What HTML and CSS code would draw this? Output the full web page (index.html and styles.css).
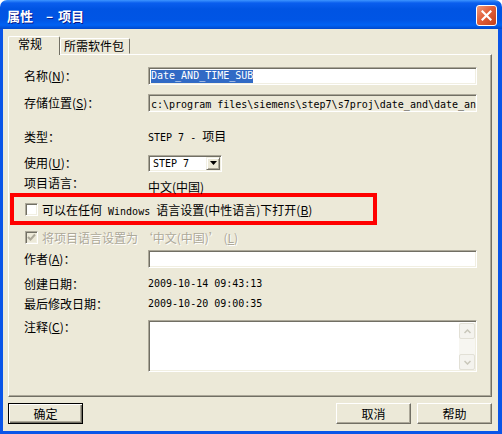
FILE: index.html
```html
<!DOCTYPE html>
<html lang="zh-CN">
<head>
    <meta charset="UTF-8">
    <title>属性 - 项目</title>
    <link rel="stylesheet" href="styles.css">
</head>
<body>
    <div class="window">
        <div class="titlebar">
            <span class="title">属性<span class="sep">–</span>项目</span>
            <span class="close-btn">
                <svg width="11" height="11" viewBox="0 0 11 11"><path d="M1.5 1.5 L9.5 9.5 M9.5 1.5 L1.5 9.5" stroke="#fff" stroke-width="2.2" stroke-linecap="square"/></svg>
            </span>
        </div>

        <div class="frame">
            <div class="tabs">
                <div class="tab active">常规</div>
                <div class="tab">所需软件包</div>
            </div>

            <div class="panel">
                <div class="row r-name">
                    <span class="label">名称(<u>N</u>)：</span>
                    <div class="edit"><span class="sel m">Date_AND_TIME_SUB</span></div>
                </div>

                <div class="row r-path">
                    <span class="label">存储位置(<u>S</u>)：</span>
                    <div class="edit readonly"><span class="m">c:\program files\siemens\step7\s7proj\date_and\date_and</span></div>
                </div>

                <div class="row r-type">
                    <span class="label">类型：</span>
                    <span class="value"><span class="m">STEP 7 - </span>项目</span>
                </div>

                <div class="row r-use">
                    <span class="label">使用(<u>U</u>)：</span>
                    <div class="combo">
                        <span class="m">STEP 7</span>
                        <span class="drop">
                            <svg width="7" height="4" viewBox="0 0 7 4"><path d="M0 0 H7 L3.5 4 Z" fill="#000"/></svg>
                        </span>
                    </div>
                </div>

                <div class="row r-lang">
                    <span class="label">项目语言：</span>
                    <span class="value">中文(中国)</span>
                </div>

                <div class="r-option">
                    <span class="checkbox"></span>
                    <span>可以在任何<span class="m"> Windows </span>语言设置(中性语言)下打开(<u>B</u>)</span>
                </div>

                <div class="r-disabled">
                    <span class="checkbox disabled">
                        <svg width="9" height="9" viewBox="0 0 9 9"><path d="M1 4 L3.5 6.5 L8 1.5" stroke="#ACA899" stroke-width="2" fill="none"/></svg>
                    </span>
                    <span class="gray">将项目语言设置为 ‘中文(中国)’ (<u>L</u>)</span>
                </div>

                <div class="row r-author">
                    <span class="label">作者(<u>A</u>)：</span>
                    <div class="edit"></div>
                </div>

                <div class="row r-created">
                    <span class="label">创建日期：</span>
                    <span class="value m">2009-10-14 09:43:13</span>
                </div>

                <div class="row r-modified">
                    <span class="label">最后修改日期：</span>
                    <span class="value m">2009-10-20 09:00:35</span>
                </div>

                <div class="row r-comment">
                    <span class="label">注释(<u>C</u>)：</span>
                    <div class="memo">
                        <div class="vscroll">
                            <span class="sb-btn">
                                <svg width="7" height="5" viewBox="0 0 7 5"><path d="M0.5 4 L3.5 1 L6.5 4" stroke="#C9C7BA" stroke-width="1.5" fill="none"/></svg>
                            </span>
                            <span class="sb-btn">
                                <svg width="7" height="5" viewBox="0 0 7 5"><path d="M0.5 1 L3.5 4 L6.5 1" stroke="#C9C7BA" stroke-width="1.5" fill="none"/></svg>
                            </span>
                        </div>
                    </div>
                </div>
            </div>

            <div class="buttons">
                <div class="btn default">确定</div>
                <div class="btn cancel">取消</div>
                <div class="btn">帮助</div>
            </div>
        </div>
    </div>
</body>
</html>
```

FILE: styles.css
```css
* {
    box-sizing: border-box;
}
body {
    margin: 0;
    background: #fff;
    font-family: "Noto Sans CJK SC", "Noto Sans", sans-serif;
    font-size: 12px;
    color: #000;
}
u {
    text-decoration: underline;
    text-underline-offset: 1px;
}
.m {
    font-family: "DejaVu Sans Mono", "Liberation Mono", monospace;
    font-size: 10px;
}

/* window chrome */
.window {
    width: 502px;
    height: 434px;
    display: flex;
    flex-direction: column;
}
.titlebar {
    height: 29px;
    flex: none;
    display: flex;
    align-items: center;
    justify-content: space-between;
    padding: 1px 5px 0 7px;
    border-radius: 7px 7px 0 0;
    background: linear-gradient(to bottom, #3D95FF 0, #0A5EEE 3px, #0054E3 9px, #0055E5 20px, #0062F4 25px, #0048CC 29px);
}
.title {
    color: #fff;
    font-weight: bold;
    font-size: 13px;
    text-shadow: 1px 1px #0A1A8A;
}
.sep {
    margin: 0 5px 0 13px;
}
.close-btn {
    width: 21px;
    height: 21px;
    display: flex;
    align-items: center;
    justify-content: center;
    border: 1px solid #fff;
    border-radius: 3px;
    background: linear-gradient(135deg, #F09A7A 0, #E2603A 45%, #C2401C 100%);
}
.frame {
    flex: 1;
    background: #ECE9D8;
    border: solid #0A55E8;
    border-width: 0 4px 3px 3px;
    padding: 7px 6px 0 5px;
}

/* tabs */
.tabs {
    display: flex;
    align-items: flex-end;
    height: 18px;
    position: relative;
    z-index: 1;
}
.tab {
    width: 70px;
    height: 16px;
    padding-left: 3px;
    line-height: 14px;
    background: #ECE9D8;
    border: 1px solid;
    border-color: #fff #716F64 transparent #fff;
    border-radius: 2px 2px 0 0;
}
.tab.active {
    width: 52px;
    height: 19px;
    margin-bottom: -1px;
    padding-left: 9px;
    border-bottom: none;
}

.panel {
    height: 343px;
    border: 1px solid;
    border-color: #fff #716F64 #716F64 #fff;
    box-shadow: inset -1px -1px #ACA899;
    padding-left: 15px;
}

/* rows */
.row {
    display: grid;
    grid-template-columns: 124px 329px;
    align-items: center;
}
.label, .value {
    line-height: 16px;
    white-space: nowrap;
}
.r-name { margin-top: 12px; }
.r-path { margin-top: 9px; }
.r-type { margin-top: 16px; height: 16px; }
.r-use { margin-top: 10px; height: 18px; }
.r-lang {
    margin-top: 3px;
    height: 16px;
    align-items: start;
}
.r-lang .value {
    padding-top: 4px;
}
.r-author { margin-top: 5px; }
.r-created { margin-top: 8px; height: 16px; }
.r-modified { margin-top: 4px; height: 16px; }
.r-comment {
    margin-top: 8px;
    align-items: start;
}
.r-comment .label {
    line-height: 13px;
}

.edit {
    height: 18px;
    padding: 1px 2px 0 2px;
    background: #fff;
    border: 1px solid;
    border-color: #ACA899 #fff #fff #ACA899;
    box-shadow: inset 1px 1px #716F64, inset -1px -1px #F1EFE2;
    overflow: hidden;
    white-space: nowrap;
    line-height: 14px;
}
.edit.readonly {
    background: #ECE9D8;
}
.sel {
    display: inline-block;
    vertical-align: top;
    height: 13px;
    margin-top: 1px;
    background: #316AC5;
    color: #fff;
    line-height: 12px;
}

.combo {
    width: 74px;
    height: 17px;
    display: flex;
    align-items: center;
    justify-content: space-between;
    padding: 0 1px 0 4px;
    background: #fff;
    border: 1px solid;
    border-color: #ACA899 #fff #fff #ACA899;
    box-shadow: inset 1px 1px #716F64, inset -1px -1px #F1EFE2;
}
.drop {
    width: 14px;
    height: 13px;
    display: flex;
    align-items: center;
    justify-content: center;
    background: #ECE9D8;
    border: 1px solid;
    border-color: #F1EFE2 #716F64 #716F64 #F1EFE2;
    box-shadow: inset 1px 1px #fff, inset -1px -1px #ACA899;
}

/* check rows */
.r-option {
    margin: 2px 0 0 -14px;
    width: 367px;
    height: 32px;
    border: 4px solid #FF0000;
    display: flex;
    align-items: center;
    gap: 4px;
    padding-left: 11px;
    white-space: nowrap;
}
.r-disabled {
    margin-top: 4px;
    height: 16px;
    display: flex;
    align-items: center;
    gap: 4px;
    padding-left: 1px;
    white-space: nowrap;
}
.checkbox {
    width: 13px;
    height: 13px;
    flex: none;
    display: flex;
    align-items: center;
    justify-content: center;
    background: #fff;
    border: 1px solid;
    border-color: #ACA899 #fff #fff #ACA899;
    box-shadow: inset 1px 1px #716F64, inset -1px -1px #F1EFE2;
}
.checkbox.disabled {
    background: #ECE9D8;
}
.gray {
    color: #ACA899;
    text-shadow: 1px 1px #fff;
}

/* comment box */
.memo {
    height: 52px;
    display: flex;
    justify-content: flex-end;
    padding: 2px 1px 1px 2px;
    background: #fff;
    border: 1px solid;
    border-color: #ACA899 #fff #fff #ACA899;
    box-shadow: inset 1px 1px #716F64, inset -1px -1px #F1EFE2;
}
.vscroll {
    width: 16px;
    display: flex;
    flex-direction: column;
    justify-content: space-between;
    background: #F7F6F1;
}
.sb-btn {
    width: 16px;
    height: 16px;
    display: flex;
    align-items: center;
    justify-content: center;
    background: #F4F3EE;
    border: 1px solid #E2E0D6;
    border-radius: 2px;
}

/* dialog buttons */
.buttons {
    display: flex;
    gap: 6px;
    margin-top: 6px;
}
.btn {
    width: 75px;
    height: 21px;
    text-align: center;
    line-height: 19px;
    border: 1px solid;
    border-color: #fff #716F64 #716F64 #fff;
    box-shadow: inset -1px -1px #ACA899;
}
.btn.default {
    border-color: #000;
    box-shadow: inset 1px 1px #fff, inset -1px -1px #716F64, inset -2px -2px #ACA899;
}
.btn.cancel {
    margin-left: auto;
}
```
